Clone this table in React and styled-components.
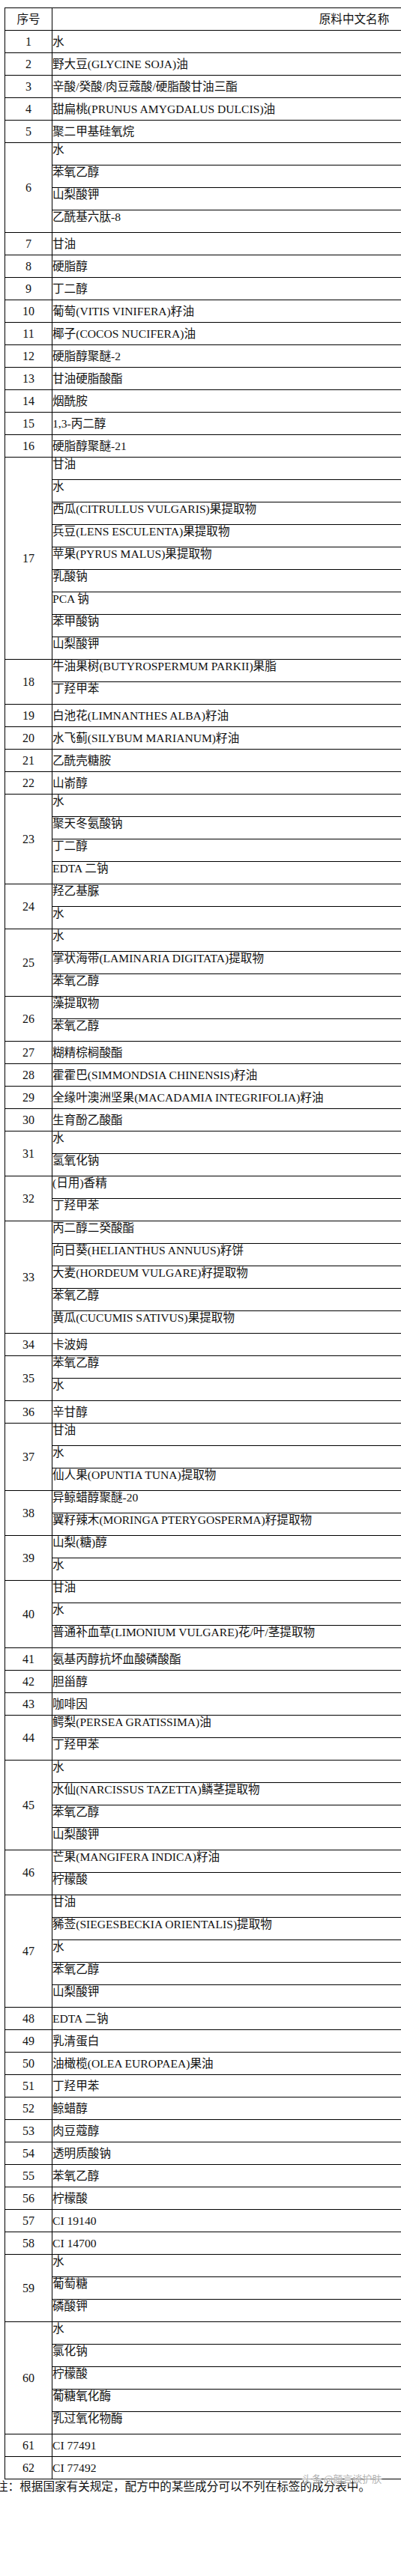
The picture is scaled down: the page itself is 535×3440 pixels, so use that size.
import React from "react";
import styled, {createGlobalStyle} from "styled-components";

const GlobalStyle = createGlobalStyle`
  html, body {
    margin: 0;
    padding: 0;
    background: #fff;
    overflow-x: hidden;
  }
`

const FONT = `"Liberation Serif", "Noto Sans CJK SC", serif`;

const rows = [
    [1, ['水']],
    [2, ['野大豆(GLYCINE SOJA)油']],
    [3, ['辛酸/癸酸/肉豆蔻酸/硬脂酸甘油三酯']],
    [4, ['甜扁桃(PRUNUS AMYGDALUS DULCIS)油']],
    [5, ['聚二甲基硅氧烷']],
    [6, ['水', '苯氧乙醇', '山梨酸钾', '乙酰基六肽-8']],
    [7, ['甘油']],
    [8, ['硬脂醇']],
    [9, ['丁二醇']],
    [10, ['葡萄(VITIS VINIFERA)籽油']],
    [11, ['椰子(COCOS NUCIFERA)油']],
    [12, ['硬脂醇聚醚-2']],
    [13, ['甘油硬脂酸酯']],
    [14, ['烟酰胺']],
    [15, ['1,3-丙二醇']],
    [16, ['硬脂醇聚醚-21']],
    [17, ['甘油', '水', '西瓜(CITRULLUS VULGARIS)果提取物', '兵豆(LENS ESCULENTA)果提取物', '苹果(PYRUS MALUS)果提取物', '乳酸钠', 'PCA 钠', '苯甲酸钠', '山梨酸钾']],
    [18, ['牛油果树(BUTYROSPERMUM PARKII)果脂', '丁羟甲苯']],
    [19, ['白池花(LIMNANTHES ALBA)籽油']],
    [20, ['水飞蓟(SILYBUM MARIANUM)籽油']],
    [21, ['乙酰壳糖胺']],
    [22, ['山嵛醇']],
    [23, ['水', '聚天冬氨酸钠', '丁二醇', 'EDTA 二钠']],
    [24, ['羟乙基脲', '水']],
    [25, ['水', '掌状海带(LAMINARIA DIGITATA)提取物', '苯氧乙醇']],
    [26, ['藻提取物', '苯氧乙醇']],
    [27, ['糊精棕榈酸酯']],
    [28, ['霍霍巴(SIMMONDSIA CHINENSIS)籽油']],
    [29, ['全缘叶澳洲坚果(MACADAMIA INTEGRIFOLIA)籽油']],
    [30, ['生育酚乙酸酯']],
    [31, ['水', '氢氧化钠']],
    [32, ['(日用)香精', '丁羟甲苯']],
    [33, ['丙二醇二癸酸酯', '向日葵(HELIANTHUS ANNUUS)籽饼', '大麦(HORDEUM VULGARE)籽提取物', '苯氧乙醇', '黄瓜(CUCUMIS SATIVUS)果提取物']],
    [34, ['卡波姆']],
    [35, ['苯氧乙醇', '水']],
    [36, ['辛甘醇']],
    [37, ['甘油', '水', '仙人果(OPUNTIA TUNA)提取物']],
    [38, ['异鲸蜡醇聚醚-20', '翼籽辣木(MORINGA PTERYGOSPERMA)籽提取物']],
    [39, ['山梨(糖)醇', '水']],
    [40, ['甘油', '水', '普通补血草(LIMONIUM VULGARE)花/叶/茎提取物']],
    [41, ['氨基丙醇抗坏血酸磷酸酯']],
    [42, ['胆甾醇']],
    [43, ['咖啡因']],
    [44, ['鳄梨(PERSEA GRATISSIMA)油', '丁羟甲苯']],
    [45, ['水', '水仙(NARCISSUS TAZETTA)鳞茎提取物', '苯氧乙醇', '山梨酸钾']],
    [46, ['芒果(MANGIFERA INDICA)籽油', '柠檬酸']],
    [47, ['甘油', '豨莶(SIEGESBECKIA ORIENTALIS)提取物', '水', '苯氧乙醇', '山梨酸钾']],
    [48, ['EDTA 二钠']],
    [49, ['乳清蛋白']],
    [50, ['油橄榄(OLEA EUROPAEA)果油']],
    [51, ['丁羟甲苯']],
    [52, ['鲸蜡醇']],
    [53, ['肉豆蔻醇']],
    [54, ['透明质酸钠']],
    [55, ['苯氧乙醇']],
    [56, ['柠檬酸']],
    [57, ['CI 19140']],
    [58, ['CI 14700']],
    [59, ['水', '葡萄糖', '磷酸钾']],
    [60, ['水', '氯化钠', '柠檬酸', '葡糖氧化酶', '乳过氧化物酶']],
    [61, ['CI 77491']],
    [62, ['CI 77492']],
];

const Page = styled.div`
    padding: 10px 0 0 6px;
    font-family: ${FONT};
    color: #111;
    height: 3430px;
    overflow: hidden;
`

const Clip = styled.div`
    width: 529px;
    overflow: hidden;
`

const Table = styled.table`
    border-collapse: collapse;
    table-layout: fixed;
    width: 869px;
    font-size: 15.6px;
    line-height: 16px;

    td, th {
        border: 1px solid #000;
        height: 30px;
        padding: 0;
        box-sizing: border-box;
    }
`

const HeadCell = styled.th`
    font-weight: normal;
    text-align: center;
    vertical-align: middle;
    width: ${p => p.$w}px;
`

const NumCell = styled.td`
    text-align: center;
    vertical-align: middle;
    font-size: 16px;
`

const NameCell = styled.td`
    text-align: left;
    vertical-align: ${p => p.$top ? 'top' : 'middle'};
    padding-top: ${p => p.$top ? '1px' : '0'} !important;
    white-space: nowrap;
`

const Note = styled.div`
    position: relative;
    margin-left: -11px;
    font-size: 15.6px;
    line-height: 16px;
    white-space: nowrap;
    font-family: "Noto Sans CJK SC", sans-serif;
`

const Watermark = styled.span`
    position: absolute;
    top: -8px;
    left: 408px;
    font-size: 13px;
    line-height: 14px;
    color: rgba(150, 150, 150, 0.75);
    text-shadow: 0 0 2px #fff, 0 0 2px #fff;
    font-family: "Noto Sans CJK SC", sans-serif;
`

const Group = ({num, items}) => {
    const multi = items.length > 1;
    return items.map((item, i) => (
        <tr key={num + '-' + i}>
            {i === 0 && <NumCell rowSpan={items.length}>{num}</NumCell>}
            <NameCell $top={multi}>{item}</NameCell>
        </tr>
    ))
}

const App = () => {
    return (
        <Page>
            <GlobalStyle/>
            <Clip>
                <Table>
                    <thead>
                    <tr>
                        <HeadCell $w={63}>序号</HeadCell>
                        <HeadCell $w={806}>原料中文名称</HeadCell>
                    </tr>
                    </thead>
                    <tbody>
                    {rows.map(([num, items]) => <Group key={num} num={num} items={items}/>)}
                    </tbody>
                </Table>
            </Clip>
            <Note>
                注：根据国家有关规定，配方中的某些成分可以不列在标签的成分表中。
                <Watermark>头条 @颜言谈护肤</Watermark>
            </Note>
        </Page>
    )
}

export default App;
